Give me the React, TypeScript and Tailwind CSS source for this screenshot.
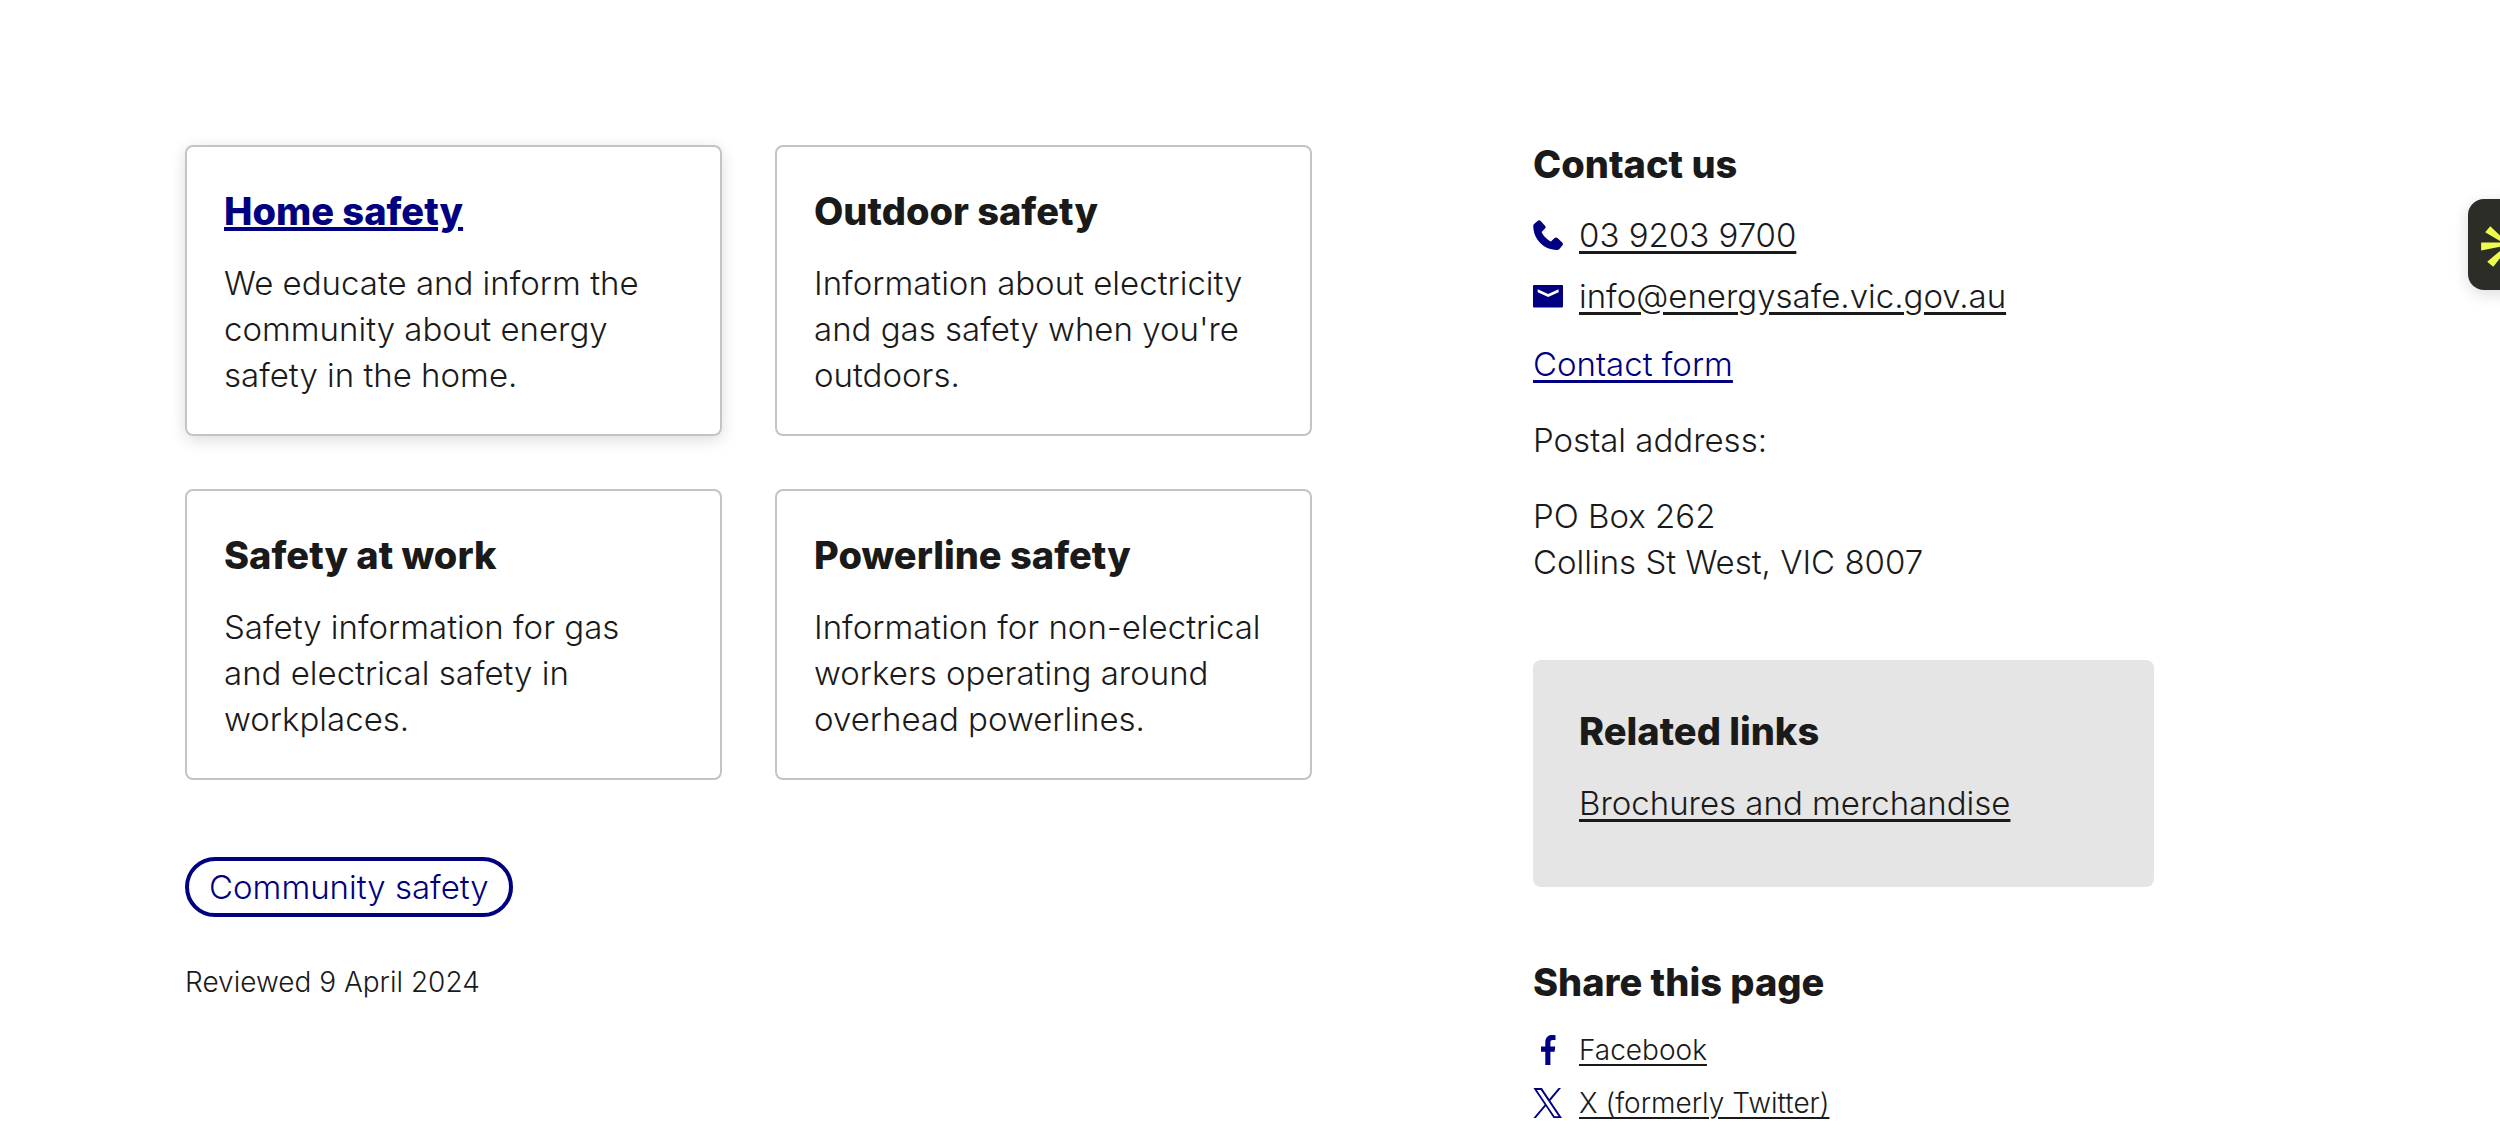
import { ReactNode } from 'react';

const CARDS = [
  { title: 'Home safety', text: 'We educate and inform the community about energy safety in the home.', active: true },
  { title: 'Outdoor safety', text: "Information about electricity and gas safety when you're outdoors.", active: false },
  { title: 'Safety at work', text: 'Safety information for gas and electrical safety in workplaces.', active: false },
  { title: 'Powerline safety', text: 'Information for non-electrical workers operating around overhead powerlines.', active: false },
];

function PhoneIcon() {
  return (
    <svg viewBox="0 0 30 30" className="h-[30px] w-[30px] shrink-0 fill-[#000080]" aria-hidden="true">
      <path d="M0.2 5.6C0.3 4.8 0.8 4.2 1.6 3.6L4.6 1C5.4 0.1 6.6 0 7.4 0.8L12 5.8C12.9 6.8 12.8 7.7 12 8.5L8.6 12C9.6 15 14.2 20 17.9 21.4L21.6 18.1C22.5 17.3 23.6 17.3 24.5 18.1L29.2 22.6C30.2 23.5 30.2 24.6 29.3 25.6L26.4 28.9C25.7 29.7 24.7 30 23.6 30C10.5 29.6 0.4 19.6 0.2 5.6Z" />
    </svg>
  );
}

function MailIcon() {
  return (
    <svg viewBox="0 0 30 30" className="h-[30px] w-[30px] shrink-0" aria-hidden="true">
      <path fill="#000080" d="M1 4H29.4A.6.6 0 0 1 30 4.6V25.4A1 1 0 0 1 29 26.4H1A1 1 0 0 1 0 25.4V5A1 1 0 0 1 1 4Z" />
      <path fill="#fff" d="M4.7 8.2L15.2 12.9L25.6 8.2V11.2L15.2 16L4.7 11.2Z" />
    </svg>
  );
}

function FacebookIcon() {
  return (
    <svg viewBox="0 0 30 30" className="h-[30px] w-[30px] shrink-0 fill-[#000080]" aria-hidden="true">
      <path d="M12.3 30V16.8H8V11.5H12.3V7.4C12.3 2.6 15 0 19.1 0C20.6 0 21.9.1 22.5.2V4.9H19.9C17.8 4.9 17.4 6 17.4 7.5V11.5H22.2L21.6 16.8H17.4V30Z" />
    </svg>
  );
}

function XIcon() {
  return (
    <svg viewBox="0 0 30 30" className="h-[30px] w-[30px] shrink-0 fill-[#000080]" aria-hidden="true">
      <path d="M17.4 12.7L28 0H25.5L16.3 11L8.9 0H.4L11.6 16.7L.4 30H2.9L12.7 18.3L20.5 30H29ZM13.9 16.9L12.8 15.2L3.9 1.9H7.8L15 12.8L16.2 14.4L25.5 28.2H21.6Z" />
    </svg>
  );
}

function IconLink({ icon, href, children, small }: { icon: ReactNode; href: string; children: ReactNode; small?: boolean }) {
  return (
    <li className="flex items-center gap-4">
      {icon}
      <a
        href={href}
        className={`underline underline-offset-4 ${small ? 'text-[28px] leading-[38px] decoration-2' : 'decoration-3'}`}
      >
        {children}
      </a>
    </li>
  );
}

function App() {
  return (
    <div className="relative min-h-screen overflow-hidden bg-white pt-[145px] pr-[346px] pl-[185px] font-['Inter',sans-serif] text-[33px] leading-[46px] font-light text-[#1a1a1a]">
      <div className="grid grid-cols-[minmax(0,1127fr)_minmax(0,621fr)] gap-[221px]">
        <main>
          <div className="grid grid-cols-2 gap-[53px]">
            {CARDS.map((card) => (
              <article
                key={card.title}
                className={`rounded-lg border-2 border-[#c4c4c4] px-[37px] pt-10 pb-9 ${card.active ? 'shadow-[0_4px_16px_rgba(0,0,0,0.14)]' : ''}`}
              >
                <h2 className="text-[38px] leading-[48px] font-extrabold">
                  <a
                    href="#"
                    className={card.active ? 'text-[#000080] underline decoration-4 underline-offset-2' : ''}
                  >
                    {card.title}
                  </a>
                </h2>
                <p className="mt-[25px]">{card.text}</p>
              </article>
            ))}
          </div>
          <a href="#" className="mt-[77px] inline-flex h-[60px] items-center rounded-full border-4 border-[#000080] px-5 text-[#000080]">
            Community safety
          </a>
          <p className="mt-[46px] text-[28px] leading-[38px]">Reviewed 9 April 2024</p>
        </main>

        <aside>
          <h2 className="text-[38px] leading-[38px] font-extrabold">Contact us</h2>
          <ul className="mt-[29px] flex flex-col gap-[15px]">
            <IconLink icon={<PhoneIcon />} href="#">03 9203 9700</IconLink>
            <IconLink icon={<MailIcon />} href="#">info@energysafe.vic.gov.au</IconLink>
          </ul>
          <a href="#" className="mt-[22px] block text-[#000080] underline decoration-3 underline-offset-4">Contact form</a>
          <p className="mt-[30px]">Postal address:</p>
          <p className="mt-[30px]">
            PO Box 262
            <br />
            Collins St West, VIC 8007
          </p>

          <section className="mt-[75px] rounded-lg bg-[#e5e5e5] px-[46px] pt-[47px] pb-[61px]">
            <h2 className="text-[38px] leading-[48px] font-extrabold">Related links</h2>
            <a href="#" className="mt-[25px] block underline decoration-3 underline-offset-4">Brochures and merchandise</a>
          </section>

          <section className="mt-[71px]">
            <h2 className="text-[38px] leading-[48px] font-extrabold">Share this page</h2>
            <ul className="mt-[25px] flex flex-col gap-[15px]">
              <IconLink icon={<FacebookIcon />} href="#" small>Facebook</IconLink>
              <IconLink icon={<XIcon />} href="#" small>X (formerly Twitter)</IconLink>
            </ul>
          </section>
        </aside>
      </div>

      {/* floating widget, partly off the right edge */}
      <button
        type="button"
        aria-label="Open assistant"
        className="absolute top-[199px] -right-[59px] h-[91px] w-[91px] rounded-2xl bg-[#2d2d28] shadow-[0_4px_16px_rgba(0,0,0,0.14)]"
      >
        <svg viewBox="0 0 90 90" className="h-full w-full fill-[#eefc4e]" aria-hidden="true">
          <path d="M22 27L17 33L36 44L38 42Z M13 43V51L37 46V43Z M19 62L25 67L40 48L38 46Z" />
        </svg>
      </button>
    </div>
  );
}

export default App;
